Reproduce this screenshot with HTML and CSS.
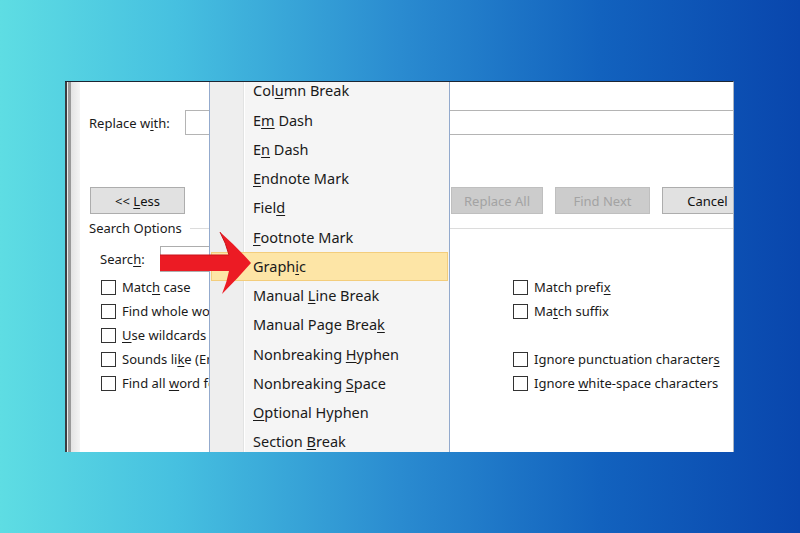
FILE: index.html
```html
<!DOCTYPE html>
<html lang="en">
<head>
  <meta charset="UTF-8" />
  <meta name="viewport" content="width=device-width, initial-scale=1.0" />
  <title>Find and Replace - Special</title>
  <link rel="stylesheet" href="styles.css">
</head>
<body>
  <div class="shot">
    <div class="frame"></div>

    <div class="dialog">
      <div class="replace-row">
        <span class="replace-label">Replace w<u>i</u>th:</span>
        <div class="textbox"></div>
      </div>

      <div class="button-row">
        <button class="btn less">&lt;&lt; <u>L</u>ess</button>
        <div class="btn-group">
          <button class="btn disabled wide">Replace All</button>
          <button class="btn disabled wider">Find Next</button>
          <button class="btn">Cancel</button>
        </div>
      </div>

      <div class="group-title"><span>Search Options</span></div>

      <div class="search-row">
        <span class="search-label">Searc<u>h</u>:</span>
        <div class="select">Down</div>
      </div>

      <div class="options">
        <label class="check"><span class="box"></span><span>Matc<u>h</u> case</span></label>
        <label class="check"><span class="box"></span><span>Match prefi<u>x</u></span></label>
        <label class="check"><span class="box"></span><span>Find whole words only</span></label>
        <label class="check"><span class="box"></span><span>Ma<u>t</u>ch suffix</span></label>
        <label class="check"><span class="box"></span><span><u>U</u>se wildcards</span></label>
        <div></div>
        <label class="check"><span class="box"></span><span>Sounds li<u>k</u>e (English)</span></label>
        <label class="check"><span class="box"></span><span>Ignore punctuation character<u>s</u></span></label>
        <label class="check"><span class="box"></span><span>Find all <u>w</u>ord forms (English)</span></label>
        <label class="check"><span class="box"></span><span>Ignore <u>w</u>hite-space characters</span></label>
      </div>
    </div>

    <ul class="menu">
      <li>Col<u>u</u>mn Break</li>
      <li>E<u>m</u> Dash</li>
      <li>E<u>n</u> Dash</li>
      <li><u>E</u>ndnote Mark</li>
      <li>Fiel<u>d</u></li>
      <li><u>F</u>ootnote Mark</li>
      <li class="active">Graph<u>i</u>c</li>
      <li>Manual <u>L</u>ine Break</li>
      <li>Manual Page Brea<u>k</u></li>
      <li>Nonbreaking <u>H</u>yphen</li>
      <li>Nonbreaking <u>S</u>pace</li>
      <li><u>O</u>ptional Hyphen</li>
      <li>Section <u>B</u>reak</li>
    </ul>

    <svg class="arrow" viewBox="158 228 96 70" width="96" height="70">
      <path d="M160 255 L229 255 Q226 243 220 232 Q238 248 251 263 Q238 278 222 294 Q227 282 229 271 L160 271 Z" fill="#ec1b24"/>
      <path d="M160 255 L229 255 Q226 243 220 232" fill="none" stroke="#c8121a" stroke-width="1"/>
    </svg>
  </div>
</body>
</html>
```

FILE: styles.css
```css
body {
  margin: 0;
  height: 533px;
  overflow: hidden;
  font-family: "Noto Sans", "Open Sans", sans-serif;
  color: #1a1a1a;
  background: linear-gradient(90deg, #5edde3 0%, #46c0e0 22%, #2a8bd0 50%, #1262be 75%, #0946ad 100%);
}

u {
  text-underline-offset: 2px;
  text-decoration-thickness: 1px;
}

.shot {
  position: relative;
  display: flex;
  box-sizing: border-box;
  width: 669px;
  height: 371px;
  margin: 81px 0 0 65px;
  border-top: 1px solid #1c2633;
  border-right: 1px solid #a9b4c2;
  background: #fff;
  overflow: hidden;
}

.frame {
  width: 13px;
  flex-shrink: 0;
  border-left: 2px solid #3a3d42;
  background: linear-gradient(90deg, #e9e9e9 0 1px, #9a9a9a 1px 4px, #e4e4e4 4px, #f5f5f5 100%);
}

.dialog {
  flex: 1;
  min-width: 0;
  padding-left: 9px;
  font-size: 13px;
  overflow: hidden;
}

/* replace row */
.replace-row {
  display: flex;
  align-items: center;
  margin-top: 28px;
  margin-right: -10px;
}

.replace-label {
  width: 96px;
  flex-shrink: 0;
}

.textbox {
  flex: 1;
  height: 23px;
  border: 1px solid #b4b4b4;
}

/* buttons */
.button-row {
  display: flex;
  margin-top: 52px;
  margin-right: -20px;
}

.btn {
  height: 27px;
  width: 91px;
  padding: 0;
  border: 1px solid #adadad;
  background: #e1e1e1;
  font-family: inherit;
  font-size: 13px;
  color: #111;
}

.btn.less {
  width: 95px;
  margin-left: 1px;
}

.btn.disabled {
  background: #cccccc;
  border-color: #bfbfbf;
  color: #a3a3a3;
}

.btn.wide { width: 92px; }
.btn.wider { width: 95px; }

.btn-group {
  display: flex;
  gap: 12px;
  margin-left: auto;
}

/* search options */
.group-title {
  display: flex;
  align-items: center;
  margin-top: 6px;
  line-height: 16px;
}

.group-title::after {
  content: "";
  flex: 1;
  height: 1px;
  margin-left: 8px;
  background: #dcdcdc;
}

.search-row {
  display: flex;
  align-items: center;
  margin-top: 10px;
  padding-left: 11px;
}

.search-label {
  width: 60px;
}

.select {
  width: 130px;
  height: 26px;
  line-height: 24px;
  padding-left: 4px;
  box-sizing: border-box;
  border: 1px solid #adadad;
  background: #fff;
}

.options {
  display: grid;
  grid-template-columns: 412px 1fr;
  grid-auto-rows: 24px;
  margin-top: 3px;
  padding-left: 12px;
}

.check {
  display: flex;
  align-items: center;
  white-space: nowrap;
}

.box {
  flex-shrink: 0;
  width: 13px;
  height: 13px;
  margin-right: 6px;
  border: 1px solid #333;
  background: #fff;
}

/* special menu */
.menu {
  position: absolute;
  left: 144px;
  top: -5.6px;
  width: 241px;
  height: 400px;
  box-sizing: border-box;
  margin: 0;
  padding: 0;
  list-style: none;
  border-left: 1px solid #93aacd;
  border-right: 1px solid #93aacd;
  background: linear-gradient(90deg, #eeeeee 0 33px, #e2e3e3 33px 34px, #ffffff 34px 35px, #f5f5f5 35px);
  font-size: 14.5px;
}

.menu li {
  box-sizing: border-box;
  height: 29.25px;
  line-height: 29.25px;
  padding-left: 43px;
  white-space: nowrap;
}

.menu li.active {
  margin: 0 1px;
  padding-left: 42px;
  background: #fde5a6;
  box-shadow: inset 0 0 0 1px #f3cd7c;
}

.arrow {
  position: absolute;
  left: 93px;
  top: 146px;
}
```
